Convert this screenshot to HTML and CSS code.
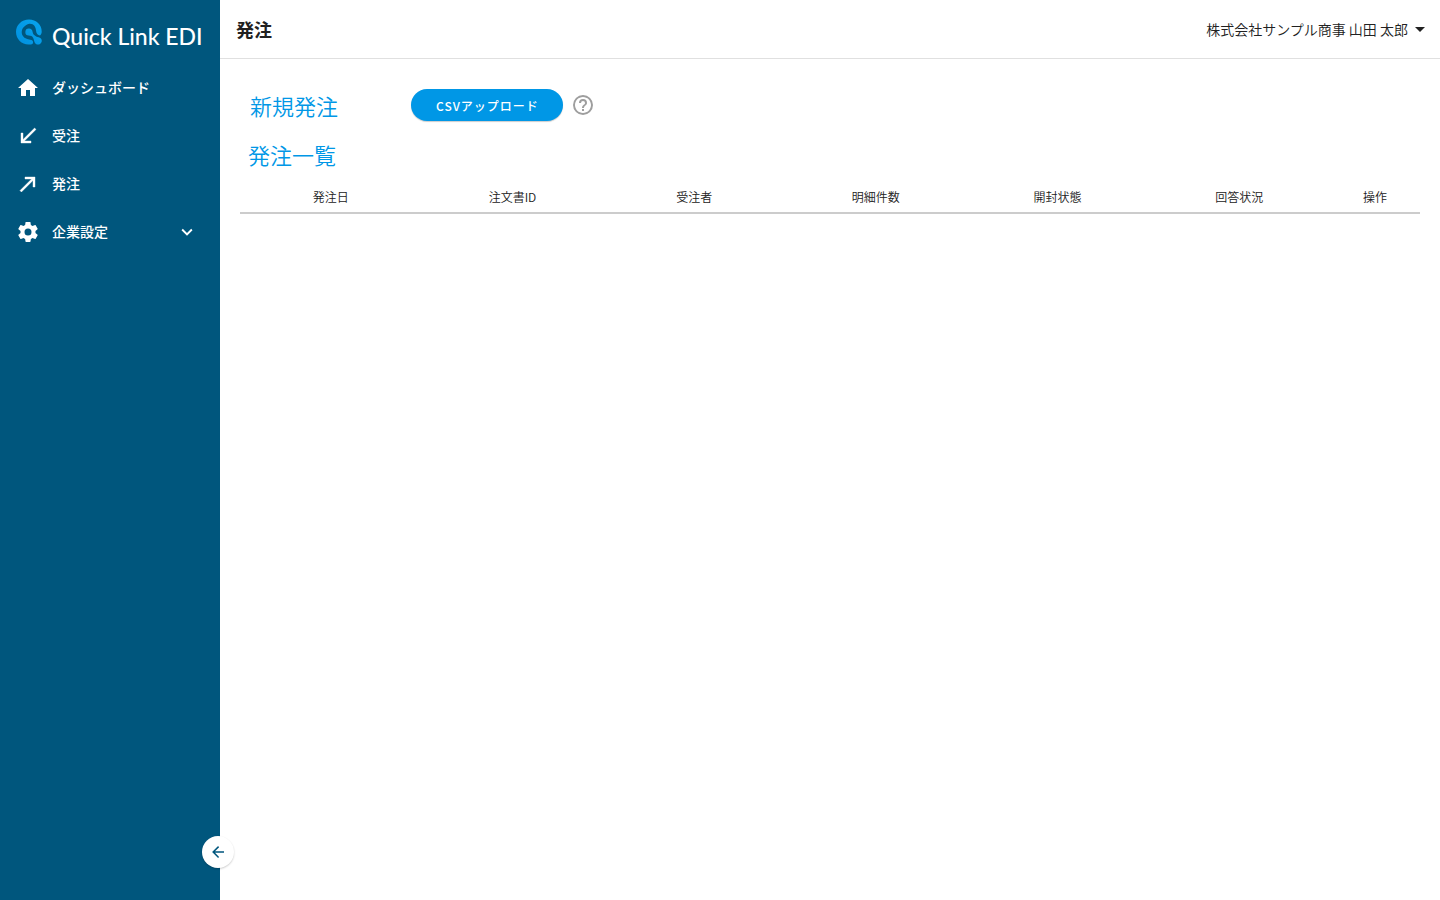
FILE: index.html
```html
<!DOCTYPE html>
<html lang="ja">
<head>
<meta charset="utf-8">
<meta name="viewport" content="width=device-width, initial-scale=1">
<title>発注 | Quick Link EDI</title>
<link rel="stylesheet" href="styles.css">
</head>
<body>
<div class="app">
  <aside class="sidebar">
    <a class="brand" href="#">
      <svg class="brand-mark" viewBox="0 0 26 26" aria-hidden="true">
        <defs>
          <linearGradient id="mark" x1="0" y1="1" x2="1" y2="0">
            <stop offset="0" stop-color="#0090e0"/>
            <stop offset="1" stop-color="#08a5ee"/>
          </linearGradient>
        </defs>
        <path fill="url(#mark)" d="M13 0.500C5.600 0.500 0 6 0 13C0 20.200 5.700 25.500 12.500 25.500H15C17.300 25.500 17.800 22.500 16 21.300C15 20.600 13.600 20.500 12 20.200C8.500 19.600 5.700 16.900 5.700 13.300C5.700 9.200 9 6 13.200 4.800C17.800 4.400 19.800 8 20 11.500C20.300 14.300 21.500 16.500 24 16.500C25.200 15.900 25.700 14 25.700 12.500C25.700 5.500 20.300 0.500 13 0.500Z"/>
        <path fill="url(#mark)" d="M13 9.600A3.500 3.500 0 0 0 12.700 16.600C14.800 16.700 16.300 17.200 17.200 18.900C18 20.500 18.200 22.700 19 23.900C20.200 25.500 22.300 25.900 24 24.900C26 23.600 26.300 20.800 24.900 19.400C23.600 18 21.800 18.300 20.100 17.400C18.300 16.400 16.900 15.200 16.600 13C16.400 10.900 15 9.600 13 9.600Z"/>
      </svg>
      <span class="brand-name">Quick Link EDI</span>
    </a>
    <nav class="nav" aria-label="メインメニュー">
      <a class="nav-item" href="#">
        <svg class="icon" viewBox="0 0 24 24" aria-hidden="true"><path d="M10 20V14H14V20H19V12H22L12 3L2 12H5V20H10Z"/></svg>
        <span class="nav-label">ダッシュボード</span>
      </a>
      <a class="nav-item" href="#">
        <svg class="icon" viewBox="0 0 24 24" aria-hidden="true"><path stroke="currentColor" stroke-width=".4" d="M20 5.410L18.590 4L7 15.590V9H5V19H15V17H8.410L20 5.410Z"/></svg>
        <span class="nav-label">受注</span>
      </a>
      <a class="nav-item" href="#">
        <svg class="icon" viewBox="0 0 24 24" aria-hidden="true"><path stroke="currentColor" stroke-width=".4" d="M9 5V7H15.590L4 18.590L5.410 20L17 8.410V15H19V5H9Z"/></svg>
        <span class="nav-label">発注</span>
      </a>
      <button class="nav-item" type="button" aria-expanded="false">
        <svg class="icon" viewBox="0 0 24 24" aria-hidden="true"><path d="M12,15.500A3.500,3.500 0 0,1 8.500,12A3.500,3.500 0 0,1 12,8.500A3.500,3.500 0 0,1 15.500,12A3.500,3.500 0 0,1 12,15.500M19.430,12.970C19.470,12.650 19.500,12.330 19.500,12C19.500,11.670 19.470,11.340 19.430,11L21.540,9.370C21.730,9.220 21.780,8.950 21.660,8.730L19.660,5.270C19.540,5.050 19.270,4.960 19.050,5.050L16.560,6.050C16.040,5.660 15.500,5.320 14.870,5.070L14.500,2.420C14.460,2.180 14.250,2 14,2H10C9.750,2 9.540,2.180 9.500,2.420L9.130,5.070C8.500,5.320 7.960,5.660 7.440,6.050L4.950,5.050C4.730,4.960 4.460,5.050 4.340,5.270L2.340,8.730C2.210,8.950 2.270,9.220 2.460,9.370L4.570,11C4.530,11.340 4.500,11.670 4.500,12C4.500,12.330 4.530,12.650 4.570,12.970L2.460,14.630C2.270,14.780 2.210,15.050 2.340,15.270L4.340,18.730C4.460,18.950 4.730,19.030 4.950,18.950L7.440,17.940C7.960,18.340 8.500,18.680 9.130,18.930L9.500,21.580C9.540,21.820 9.750,22 10,22H14C14.250,22 14.460,21.820 14.500,21.580L14.870,18.930C15.500,18.670 16.040,18.340 16.560,17.940L19.050,18.950C19.270,19.030 19.540,18.950 19.660,18.730L21.660,15.270C21.780,15.050 21.730,14.780 21.540,14.630L19.430,12.970Z"/></svg>
        <span class="nav-label">企業設定</span>
        <svg class="chevron" viewBox="0 0 24 24" aria-hidden="true"><path d="M7.410,8.580L12,13.170L16.590,8.580L18,10L12,16L6,10L7.410,8.580Z"/></svg>
      </button>
    </nav>
    <button class="collapse" type="button" aria-label="メニューを閉じる">
      <svg viewBox="0 0 24 24" aria-hidden="true"><path d="M20,11V13H8L13.500,18.500L12.080,19.920L4.160,12L12.080,4.080L13.500,5.500L8,11H20Z"/></svg>
    </button>
  </aside>
  <div class="page">
    <header class="topbar">
      <h1>発注</h1>
      <button class="account" type="button" aria-haspopup="menu">
        <span>株式会社サンプル商事 山田 太郎</span>
        <svg viewBox="0 0 10 5" aria-hidden="true"><path d="M0 0H10L5 5Z"/></svg>
      </button>
    </header>
    <main class="content">
      <section class="new-order">
        <h2>新規発注</h2>
        <button class="upload" type="button">CSVアップロード</button>
        <button class="help" type="button" aria-label="ヘルプ">
          <svg viewBox="0 0 24 24" aria-hidden="true"><path d="M11,18H13V16H11V18M12,2A10,10 0 0,0 2,12A10,10 0 0,0 12,22A10,10 0 0,0 22,12A10,10 0 0,0 12,2M12,20C7.590,20 4,16.410 4,12C4,7.590 7.590,4 12,4C16.410,4 20,7.590 20,12C20,16.410 16.410,20 12,20M12,6A4,4 0 0,0 8,10H10A2,2 0 0,1 12,8A2,2 0 0,1 14,10C14,12 11,11.750 11,15H13C13,12.750 16,12.500 16,10A4,4 0 0,0 12,6Z"/></svg>
        </button>
      </section>
      <section class="orders">
        <h2 id="orders-title">発注一覧</h2>
        <table class="order-table" aria-labelledby="orders-title">
          <thead>
            <tr>
              <th scope="col">発注日</th>
              <th scope="col">注文書ID</th>
              <th scope="col">受注者</th>
              <th scope="col">明細件数</th>
              <th scope="col">開封状態</th>
              <th scope="col">回答状況</th>
              <th scope="col" class="actions">操作</th>
            </tr>
          </thead>
          <tbody></tbody>
        </table>
      </section>
    </main>
  </div>
</div>
</body>
</html>
```
FILE: styles.css
```css
*, *::before, *::after { box-sizing: border-box; }

body {
  margin: 0;
  background: #fff;
  color: #212121;
  font-family: "Noto Sans CJK JP", sans-serif;
  font-size: 14px;
  line-height: 20px;
}

h1, h2 { margin: 0; }

button {
  margin: 0;
  padding: 0;
  border: 0;
  background: none;
  color: inherit;
  font: inherit;
  cursor: pointer;
}

svg { display: block; fill: currentColor; }

.app {
  display: flex;
  min-height: 100vh;
}

.sidebar {
  position: sticky;
  top: 0;
  flex: 0 0 220px;
  height: 100vh;
  background: #00567d;
  color: #fff;
}

.brand {
  display: flex;
  align-items: center;
  gap: 10px;
  padding: 16px;
  color: #fff;
  text-decoration: none;
}

.brand-mark { width: 26px; height: 26px; }

.brand-name {
  padding-top: 8px;
  font-family: Lato, sans-serif;
  font-size: 23px;
  font-weight: 500;
  line-height: 24px;
  white-space: nowrap;
}

.nav { display: flex; flex-direction: column; }

.nav-item {
  display: flex;
  align-items: center;
  gap: 12px;
  min-height: 48px;
  padding: 0 22px 0 16px;
  color: #fff;
  font-weight: 500;
  text-align: left;
  text-decoration: none;
}

.nav-label { padding-bottom: 2px; }

.icon { width: 24px; height: 24px; }

.chevron { width: 22px; height: 22px; margin-left: auto; }

.collapse {
  position: absolute;
  right: -14px;
  bottom: 32px;
  display: grid;
  place-items: center;
  width: 32px;
  height: 32px;
  border-radius: 50%;
  background: #fff;
  color: #00567d;
  box-shadow: 0 1px 2px rgba(0, 0, 0, .2);
}

.collapse svg { width: 18px; height: 18px; }

.page { flex: 1; min-width: 0; }

.topbar {
  display: flex;
  align-items: center;
  justify-content: space-between;
  min-height: 59px;
  padding: 0 15px 0 16px;
  border-bottom: 1px solid #e0e0e0;
}

.topbar h1 {
  font-size: 18px;
  font-weight: 700;
  line-height: 28px;
}

.account {
  display: flex;
  align-items: center;
  gap: 7px;
  font-weight: 350;
}

.account svg { width: 10px; height: 5px; }

.content { padding: 30px 20px; }

.content h2 {
  color: #0097e6;
  font-size: 22px;
  font-weight: 350;
  line-height: 32px;
}

.new-order {
  display: flex;
  align-items: center;
  padding-left: 10px;
}

.new-order h2 { flex: 0 0 161px; }

.upload {
  height: 32px;
  padding: 2px 24px 0 25px;
  border-radius: 16px;
  background: #0097e6;
  color: #fff;
  font-size: 12px;
  font-weight: 500;
  letter-spacing: 1px;
  box-shadow: 0 1px 1px rgba(0, 0, 0, .2);
}

.help { margin-left: 8px; color: #9e9e9e; }

.help svg { width: 24px; height: 24px; }

.orders { padding-top: 17px; }

.orders h2 { padding-left: 8px; }

.order-table {
  width: 100%;
  margin-top: 12px;
  border-collapse: collapse;
  table-layout: fixed;
}

.order-table th {
  padding: 6px 0;
  border-bottom: 2px solid #ccc;
  font-size: 12px;
  font-weight: 350;
  line-height: 18px;
  text-align: center;
}

.order-table .actions { width: 90px; }
```
